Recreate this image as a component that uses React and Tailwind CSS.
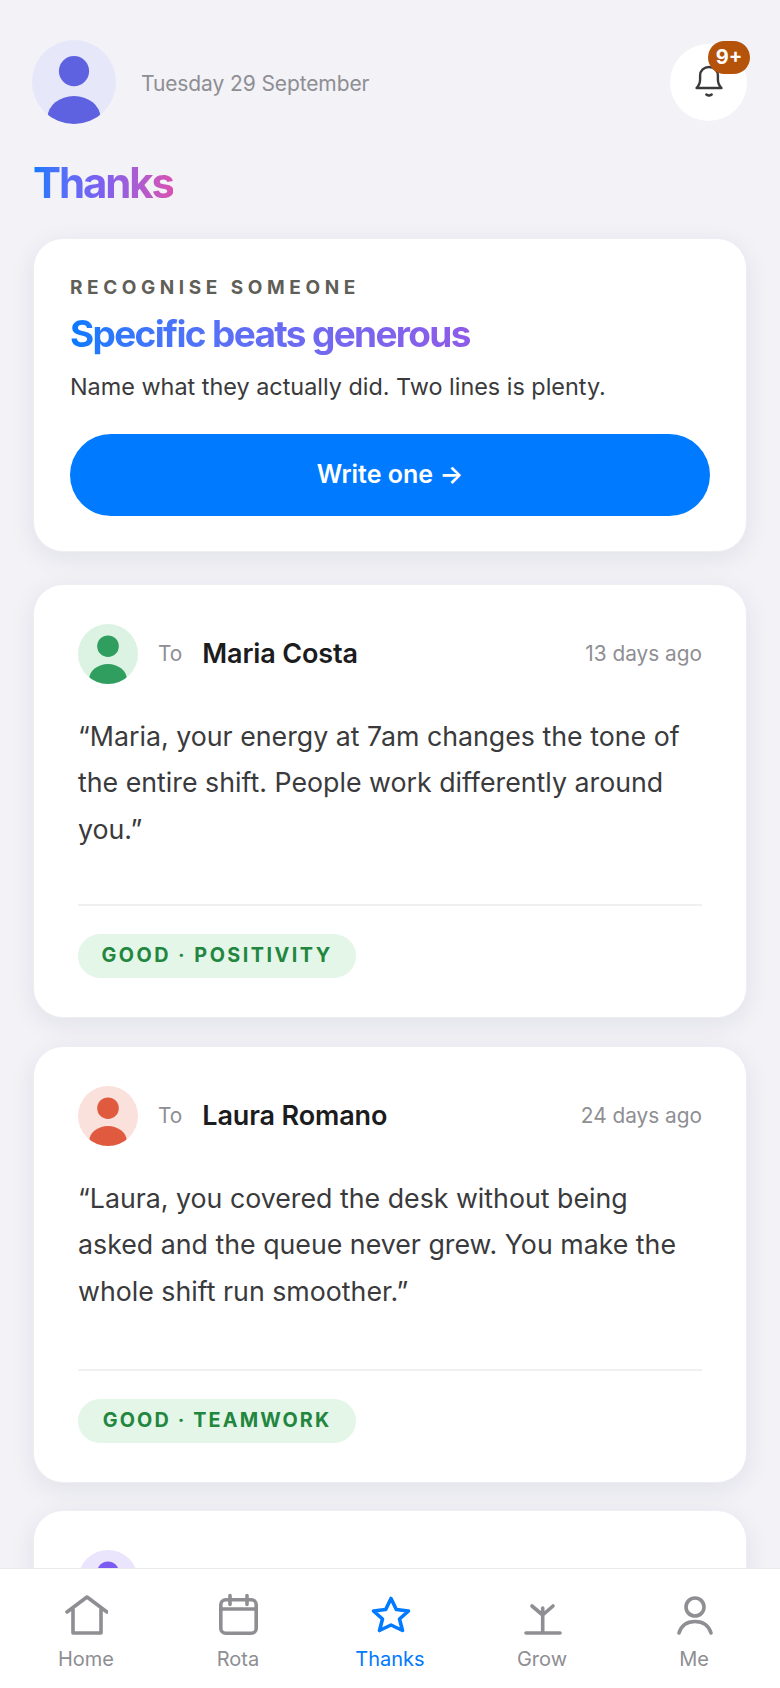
const font = { fontFamily: 'Inter, "Liberation Sans", sans-serif' };

function Person({ size, bg, fg }) {
  return (
    <div className="shrink-0 rounded-full overflow-hidden" style={{ width: size, height: size, backgroundColor: bg }}>
      <svg viewBox="0 0 100 100" width={size} height={size}>
        <circle cx="50" cy="37" r="18" fill={fg} />
        <ellipse cx="50" cy="92" rx="31.500" ry="25.300" fill={fg} />
      </svg>
    </div>
  );
}

const cardClass = 'mx-[33px] shrink-0 rounded-[30px] bg-white border border-[#eeeef2] shadow-[0_6px_26px_rgba(30,30,60,0.08)]';

function Card({ av, avFg, to, ago, lines, tag, tagTrack, size, gap }) {
  return (
    <section className={`${cardClass} ${size} px-[44px] pt-[39px] flex flex-col`}>
      <div className="flex items-center h-[60px]">
        <Person size={60} bg={av} fg={avFg} />
        <span className="ml-[20px] text-[20.800px] text-[#8e8e93]">To</span>
        <span className="ml-[20px] text-[27px] font-semibold text-[#1c1c1e] tracking-[-0.005em]">{to}</span>
        <span className="ml-auto text-[20.800px] text-[#8e8e93]">{ago}</span>
      </div>
      <p className="mt-[29px] text-[26.750px] leading-[46.300px] text-[#3a3a3c] h-[140px]">
        {lines.map((l) => (
          <span key={l} className="block whitespace-nowrap">{l}</span>
        ))}
      </p>
      <div className={`${gap} h-[2px] bg-[#f0f0f3]`} />
      <div className={`${tagTrack} mt-[28px] self-start h-[44px] w-[278px] rounded-full bg-[#e3f6e8] flex items-center justify-center text-[19.800px] font-bold text-[#22863f] whitespace-nowrap`}>{tag}</div>
    </section>
  );
}

function NavItem({ label, active, children }) {
  return (
    <div className={`flex-1 flex flex-col items-center ${active ? 'text-[#007aff]' : 'text-[#8e8e93]'}`}>
      <div className="h-[48px] w-[48px] flex items-center justify-center">{children}</div>
      <span className="mt-[9px] text-[20px] leading-[24px]">{label}</span>
    </div>
  );
}

export default function App() {
  const s = { fill: 'none', stroke: 'currentColor', strokeWidth: 3.6, strokeLinecap: 'round', strokeLinejoin: 'round' };
  return (
    <div style={font} className="w-[780px] h-[1688px] bg-[#f2f2f7] overflow-hidden flex flex-col">
      <main className="flex-1 min-h-0 overflow-hidden flex flex-col">
        <header className="flex items-center h-[84px] mt-[40px] pl-[32px] pr-[33px]">
          <Person size={84} bg="#e6e8fa" fg="#5e62e0" />
          <span className="ml-[25px] mt-[3px] text-[21px] text-[#8e8e93] tracking-[-0.005em]">Tuesday 29 September</span>
          <div className="ml-auto relative w-[77px] h-[77px] rounded-full bg-white flex items-center justify-center text-[#3a3a3c]">
            <svg width="32" height="36" viewBox="0 0 32 36" fill="none" stroke="currentColor" strokeWidth="2.400" strokeLinecap="round" strokeLinejoin="round">
              <path d="M3.500 24H28.500C25.900 21.400 24.900 19 24.900 15.500V11.500C24.900 6.500 21 3 16 3S7.100 6.500 7.100 11.500V15.500C7.100 19 6.100 21.400 3.500 24Z" />
              <path d="M13.300 30.500c1.600 1.300 3.800 1.300 5.400 0" />
            </svg>
            <span className="absolute left-[38px] -top-[3px] w-[42px] h-[33px] rounded-full bg-[#b45309] text-white text-[20px] font-bold flex items-center justify-center">9+</span>
          </div>
        </header>

        <h1 className="ml-[33px] mt-[35px] w-fit text-[42px] leading-[48px] font-bold tracking-[-0.05em] text-transparent bg-clip-text bg-gradient-to-r from-[#007aff] via-[#7d5ff0] to-[#d94fb0]">Thanks</h1>

        <section className={`${cardClass} mt-[31px] h-[314px] px-[36px] pt-[38px]`}>
          <div className="text-[19px] leading-[22px] font-bold text-[#5f5f58] tracking-[0.24em]">RECOGNISE SOMEONE</div>
          <h2 className="mt-[13px] w-fit text-[37px] leading-[44px] font-bold tracking-[-0.045em] text-transparent bg-clip-text bg-gradient-to-r from-[#007aff] to-[#8e5be8]">Specific beats generous</h2>
          <p className="mt-[16px] text-[23.400px] leading-[30px] text-[#3a3a3c]">Name what they actually did. Two lines is plenty.</p>
          <button className="mt-[32px] w-full h-[82px] rounded-full bg-[#007aff] text-white text-[25px] font-semibold">Write one →</button>
        </section>

        <div className="mt-[32px] flex flex-col">
          <Card size="h-[434px] mb-[28px]" gap="mt-[51px]" tagTrack="tracking-[0.125em]" av="#dcf3e3" avFg="#2f9e5f" to="Maria Costa" ago="13 days ago" tag="GOOD · POSITIVITY"
            lines={['“Maria, your energy at 7am changes the tone of', 'the entire shift. People work differently around', 'you.”']} />
          <Card size="h-[437px] mb-[27px]" gap="mt-[54px]" tagTrack="tracking-[0.108em]" av="#fbe1dc" avFg="#e05a40" to="Laura Romano" ago="24 days ago" tag="GOOD · TEAMWORK"
            lines={['“Laura, you covered the desk without being', 'asked and the queue never grew. You make the', 'whole shift run smoother.”']} />
          <section className={`${cardClass} h-[300px] px-[44px] pt-[39px]`}>
            <Person size={60} bg="#ebe4fd" fg="#7c5cf0" />
          </section>
        </div>
      </main>

      <nav className="shrink-0 h-[120px] bg-white border-t border-[#e9e9ee] flex pt-[21px] px-[10px]">
        <NavItem label="Home">
          <svg width="44" height="44" viewBox="0 0 44 44" {...s}><path d="M3 20 23 5l20 15M9 17v24h28V17" /></svg>
        </NavItem>
        <NavItem label="Rota">
          <svg width="44" height="44" viewBox="0 0 44 44" {...s}><rect x="4.800" y="7.800" width="35.400" height="33.400" rx="5" /><path d="M4.800 17h35.400M14 3.500v9M31 3.500v9" /></svg>
        </NavItem>
        <NavItem label="Thanks" active>
          <svg width="44" height="44" viewBox="0 0 44 44" {...s}><path d="M23 6.500 28.300 17.500 40.500 19 31.500 27 34.500 38.500 23 33 11.500 38.500 14.500 27 5.500 19 17.700 17.500Z" /></svg>
        </NavItem>
        <NavItem label="Grow">
          <svg width="44" height="44" viewBox="0 0 44 44" {...s}><path d="M6 41h34M22.700 16v25M12 14l10.700 9L33 14" /></svg>
        </NavItem>
        <NavItem label="Me">
          <svg width="44" height="44" viewBox="0 0 44 44" {...s}><circle cx="23" cy="15" r="9" /><path d="M7 41c2.500-8 9-11.500 16-11.500S36.500 33 39 41" /></svg>
        </NavItem>
      </nav>
    </div>
  );
}
